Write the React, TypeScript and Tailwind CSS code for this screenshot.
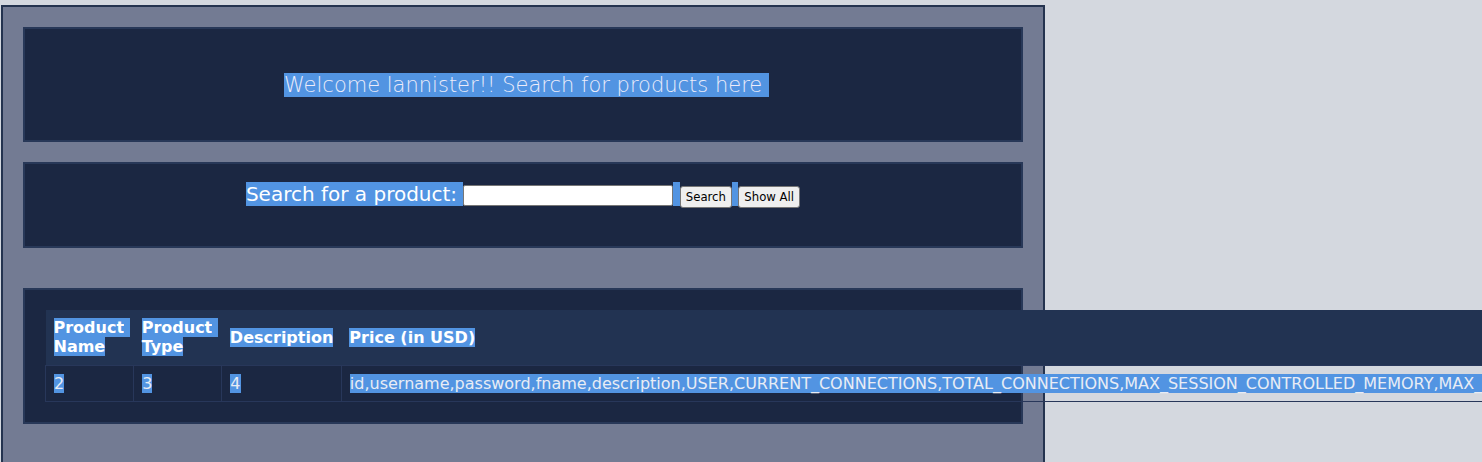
import React from "react";

const HL = "bg-[#5294e2]";

const columns = ["2", "3", "4"];
const leaked =
  "id,username,password,fname,description,USER,CURRENT_CONNECTIONS,TOTAL_CONNECTIONS,MAX_SESSION_CONTROLLED_MEMORY,MAX_SESSION_TOTAL_MEMORY";

function TwoLine({ a, b }: { a: string; b: string }) {
  return (
    <>
      <span className={HL}>{a}</span>
      <span className={`${HL} -mr-[4px]`}>{"\u00a0"}</span>
      <br />
      <span className={HL}>{b}</span>
    </>
  );
}

export default function App() {
  return (
    <div className="h-screen w-full overflow-hidden bg-[#d4d8df] font-['DejaVu_Sans',sans-serif] leading-[normal]">
      <div className="ml-[1px] mt-[5px] h-[500px] w-[1044px] border-2 border-[#24334f] bg-[#737b93] p-5">
        {/* welcome banner */}
        <div className="flex h-[115px] items-center justify-center border-2 border-[#283858] bg-[#1b2742]">
          <span className={`${HL} ml-[7px] text-[21px] font-extralight text-[#ececfa]`}>
            Welcome lannister!! Search for products here{"\u00a0"}
          </span>
        </div>

        {/* search form */}
        <div className="mt-5 h-[86px] border-2 border-[#283858] bg-[#1b2742] pt-[18px] text-center text-[20px] text-white">
          <span className={HL}>Search for a product:{"\u00a0"}</span>
          <input
            type="text"
            className="h-[21px] w-[210px] rounded-[2px] border border-[#767676] bg-white px-[2px] align-[1px] text-[13px] text-black outline-none"
          />
          <span className={HL}>{"\u00a0"}</span>
          <button className="h-[22px] rounded-[3px] border border-[#767676] bg-[#efefef] px-[5px] align-[0px] font-['DejaVu_Sans_Condensed','DejaVu_Sans',sans-serif] text-[13px] text-black">
            Search
          </button>
          <span className={HL}>{"\u00a0"}</span>
          <button className="h-[22px] rounded-[3px] border border-[#767676] bg-[#efefef] px-[5px] align-[0px] font-['DejaVu_Sans_Condensed','DejaVu_Sans',sans-serif] text-[13px] text-black">
            Show All
          </button>
        </div>

        {/* results */}
        <div className="mt-10 border-2 border-[#283858] bg-[#1b2742] p-5">
          <table className="border-collapse text-left text-[16px]">
            <thead>
              <tr className="bg-[#223352] font-bold text-white">
                <th className="px-2 pt-2 pb-[9px] align-middle">
                  <TwoLine a="Product" b="Name" />
                </th>
                <th className="px-2 pt-2 pb-[9px] align-middle">
                  <TwoLine a="Product" b="Type" />
                </th>
                <th className="px-2 pt-2 pb-[9px] align-middle">
                  <span className={HL}>Description</span>
                </th>
                <th className="px-2 pt-2 pb-[9px] align-middle">
                  <span className={HL}>Price (in USD)</span>
                </th>
              </tr>
            </thead>
            <tbody>
              <tr className="text-[#e8ecf5]">
                {columns.map((c) => (
                  <td key={c} className={`border border-[#28375a] py-2 ${c === "4" ? "pl-2 pr-[10px]" : "px-2"}`}>
                    <span className={HL}>{c}</span>
                  </td>
                ))}
                <td className="whitespace-nowrap border border-[#28375a] px-2 py-2">
                  <span className={HL}>{leaked}</span>
                </td>
              </tr>
            </tbody>
          </table>
        </div>
      </div>
    </div>
  );
}
